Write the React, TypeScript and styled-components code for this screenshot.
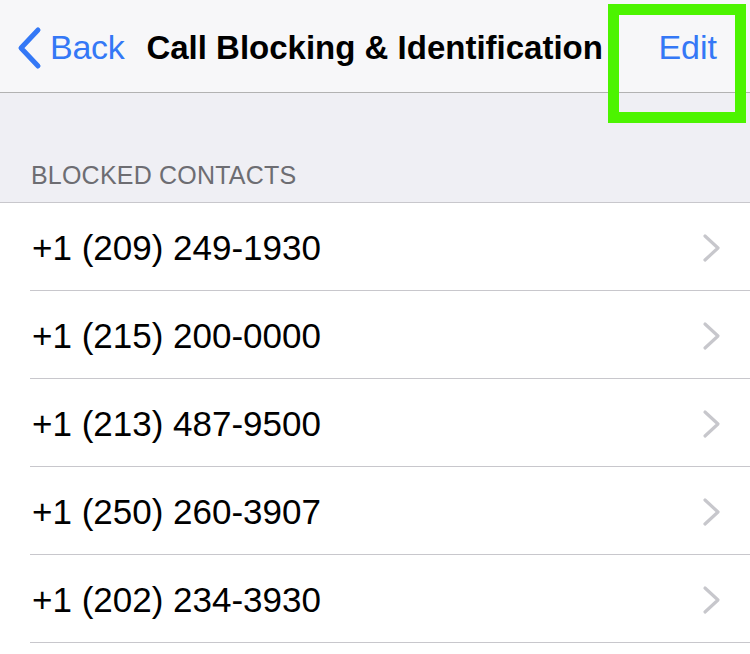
import React from 'react'
import { styled, createGlobalStyle } from 'styled-components'

const contacts = [
  '+1 (209) 249-1930',
  '+1 (215) 200-0000',
  '+1 (213) 487-9500',
  '+1 (250) 260-3907',
  '+1 (202) 234-3930',
]

const App = () => {
  return (
    <Page>
      <GlobalStyle />
      <NavBar>
        <BackButton>
          <svg width="28" height="44" viewBox="0 0 28 44">
            <path d="M22 4 L5 22 L22 40" fill="none" stroke="#3478f6" strokeWidth="5" strokeLinecap="round" strokeLinejoin="round" />
          </svg>
          <BackText>Back</BackText>
        </BackButton>
        <Title>Call Blocking &amp; Identification</Title>
        <EditButton>Edit</EditButton>
        <Highlight />
      </NavBar>
      <SectionHeader>BLOCKED CONTACTS</SectionHeader>
      <List>
        {contacts.map((c) => (
          <Row key={c}>
            <Number>{c}</Number>
            <Chevron width="20" height="30" viewBox="0 0 20 30">
              <path d="M3 3 L16 15 L3 27" fill="none" stroke="#c7c7cc" strokeWidth="3.2" strokeLinecap="round" strokeLinejoin="round" />
            </Chevron>
          </Row>
        ))}
      </List>
    </Page>
  )
}

export default App

const GlobalStyle = createGlobalStyle`
body {
  margin: 0;
  background: #efeff4;
  font-family: "Liberation Sans", Arial, sans-serif;
}
`
const Page = styled.div`
width: 750px;
height: 654px;
overflow: hidden;
background: #efeff4;
display: flex;
flex-direction: column;
`
const NavBar = styled.div`
position: relative;
flex-shrink: 0;
height: 93px;
background: #f7f7f9;
border-bottom: 1px solid #b2b2b2;
display: flex;
align-items: center;
padding: 3px 0 0 16px;
box-sizing: border-box;
`
const BackButton = styled.div`
display: flex;
align-items: center;
color: #3478f6;
`
const BackText = styled.div`
font-size: 34px;
margin-left: 6px;
letter-spacing: -0.3px;
`
const Title = styled.div`
font-size: 33px;
font-weight: 700;
color: #000;
margin-left: 22px;
`
const EditButton = styled.div`
font-size: 34px;
color: #3478f6;
margin-left: auto;
margin-right: 33px;
`
const Highlight = styled.div`
position: absolute;
left: 608px;
top: 4px;
width: 138px;
height: 119px;
box-sizing: border-box;
border: 11px solid #4cf400;
z-index: 2;
`
const SectionHeader = styled.div`
flex-shrink: 0;
height: 110px;
box-sizing: border-box;
padding: 0 0 12px 31px;
display: flex;
align-items: flex-end;
font-size: 25px;
color: #6d6d72;
letter-spacing: 0.2px;
border-bottom: 1px solid #c8c7cc;
`
const List = styled.div`
flex: 1;
background: #fff;
`
const Row = styled.div`
margin-left: 30px;
height: 88px;
box-sizing: border-box;
border-bottom: 1px solid #c8c7cc;
display: flex;
align-items: center;
justify-content: space-between;
padding: 2px 28px 0 0;
`
const Number = styled.div`
font-size: 35px;
color: #000;
padding-left: 2px;
`
const Chevron = styled.svg`
display: block;
`
